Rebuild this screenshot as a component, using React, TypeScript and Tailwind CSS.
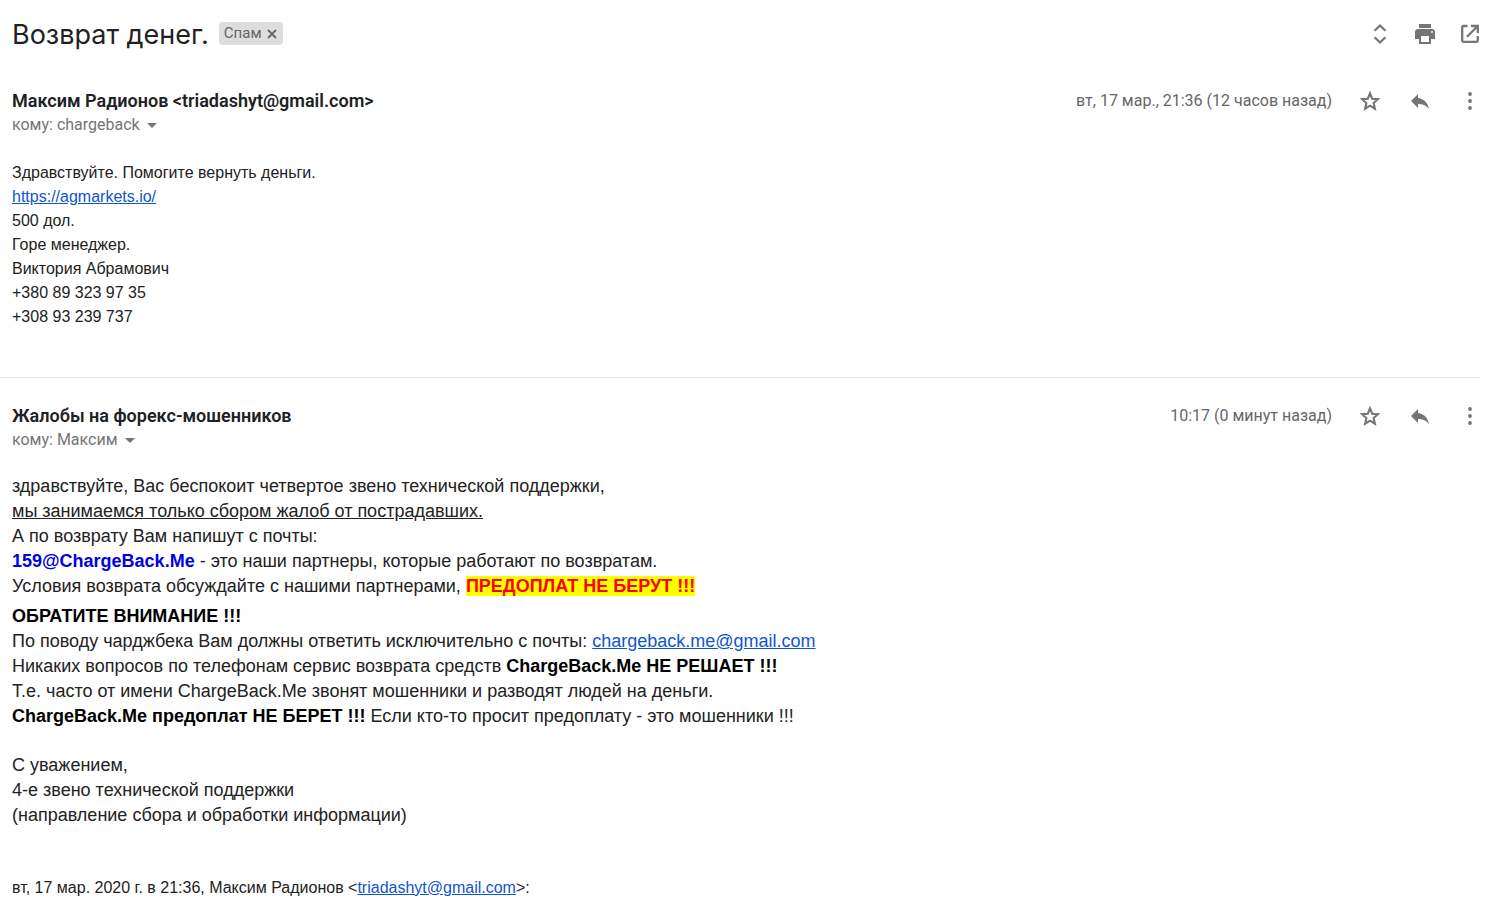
import type { ReactNode } from "react";
import { MdArrowDropDown, MdReply } from "react-icons/md";

interface MessageProps {
  sender: string;
  recipient: string;
  date: string;
  children: ReactNode;
}

function ExpandIcon() {
  return (
    <svg viewBox="0 0 24 24" className="size-6" fill="none" stroke="currentColor" strokeWidth="2.2" aria-hidden="true">
      <path d="M6.600 8.800L12 3.500l5.400 5.300M6.600 15.200L12 20.500l5.400-5.300" />
    </svg>
  );
}

function PrintIcon() {
  return (
    <svg viewBox="0 0 24 24" className="size-6" fill="currentColor" fillRule="evenodd" aria-hidden="true">
      <path d="M6 2h12v4H6z" />
      <path d="M5 7h14c1.700 0 3 1.300 3 3v7h-4v5H6v-5H2v-7c0-1.700 1.300-3 3-3zm3 7v6h8v-6H8zm11-5a1 1 0 100 2 1 1 0 000-2z" />
    </svg>
  );
}

function OpenInNewIcon() {
  return (
    <svg viewBox="0 0 24 24" className="size-6" fill="none" stroke="currentColor" strokeWidth="2.300" aria-hidden="true">
      <path d="M9.500 4H5.500Q4.200 4 4.200 5.300v13.200q0 1.300 1.300 1.300h13q1.300 0 1.300-1.300V14" />
      <path d="M13 4h6.800v7M19.500 4.300L9 14.800" />
    </svg>
  );
}

function StarIcon() {
  return (
    <svg viewBox="0 0 24 24" className="size-6" fill="none" stroke="currentColor" strokeWidth="2.100" aria-hidden="true">
      <path d="M12 4.300l2.200 5.400 5.700.5-4.300 3.800 1.300 5.700L12 16.700l-4.900 3 1.300-5.700-4.300-3.800 5.700-.5z" />
    </svg>
  );
}

function MoreIcon() {
  return (
    <svg viewBox="0 0 24 24" className="size-6" fill="currentColor" aria-hidden="true">
      <circle cx="12" cy="5" r="1.900" />
      <circle cx="12" cy="12" r="1.900" />
      <circle cx="12" cy="19" r="1.900" />
    </svg>
  );
}

function CloseIcon() {
  return (
    <svg viewBox="0 0 12 12" className="size-3" fill="none" stroke="currentColor" strokeWidth="1.800" aria-hidden="true">
      <path d="M2 2l8 8M10 2l-8 8" />
    </svg>
  );
}

function IconButton({ label, children }: { label: string; children: ReactNode }) {
  return (
    <button type="button" aria-label={label} title={label} className="shrink-0 text-[#757575] hover:text-gray-900">
      {children}
    </button>
  );
}

function Message({ sender, recipient, date, children }: MessageProps) {
  return (
    <article className="pr-[18px] pl-3">
      <header className="flex items-start justify-between gap-6 font-[Roboto,sans-serif]">
        <div>
          <h2 className="text-lg leading-6 font-semibold text-[#202124]">{sender}</h2>
          <button type="button" className="flex h-6 items-center text-base text-[#757575]">
            <span>кому: {recipient}</span>
            <MdArrowDropDown className="size-6" />
          </button>
        </div>
        <div className="flex h-6 items-center gap-[26px]">
          <time className="text-base text-[#666]">{date}</time>
          <IconButton label="Пометить">
            <StarIcon />
          </IconButton>
          <IconButton label="Ответить">
            <MdReply className="size-6" />
          </IconButton>
          <IconButton label="Ещё">
            <MoreIcon />
          </IconButton>
        </div>
      </header>
      {children}
    </article>
  );
}

function MailLink({ href, children }: { href: string; children: ReactNode }) {
  return (
    <a href={href} className="text-[#1155cc] underline">
      {children}
    </a>
  );
}

export default function App() {
  return (
    <main className="bg-white font-['Liberation_Sans',Arial,sans-serif] text-[#222]">
      {/* Subject */}
      <div className="flex items-center justify-between pt-[14px] pr-[18px] pl-3">
        <div className="flex items-center gap-[10px] font-[Roboto,sans-serif]">
          <h1 className="pt-[3px] font-[Inter,sans-serif] text-[27px] leading-9 text-[#202124]">Возврат денег.</h1>
          <span className="flex h-[23px] items-center gap-1 rounded bg-[#ddd] px-[5px] text-[15px] text-[#666]">
            Спам
            <button type="button" aria-label="Удалить ярлык">
              <CloseIcon />
            </button>
          </span>
        </div>
        <div className="flex items-center gap-[21px]">
          <IconButton label="Развернуть все">
            <ExpandIcon />
          </IconButton>
          <IconButton label="Печать">
            <PrintIcon />
          </IconButton>
          <IconButton label="В новом окне">
            <OpenInNewIcon />
          </IconButton>
        </div>
      </div>

      <div className="pt-9">
        <Message sender="Максим Радионов <triadashyt@gmail.com>" recipient="chargeback" date="вт, 17 мар., 21:36 (12 часов назад)">
          <div className="pt-6 pb-12 text-base leading-6">
            <p>Здравствуйте. Помогите вернуть деньги.</p>
            <p>
              <MailLink href="https://agmarkets.io/">https://agmarkets.io/</MailLink>
            </p>
            <p>500 дол.</p>
            <p>Горе менеджер.</p>
            <p>Виктория Абрамович</p>
            <p>+380 89 323 97 35</p>
            <p>+308 93 239 737</p>
          </div>
        </Message>
      </div>

      <hr className="mr-5 border-[#e8e8e8]" />

      <div className="pt-[26px]">
        <Message sender="Жалобы на форекс-мошенников" recipient="Максим" date="10:17 (0 минут назад)">
          <div className="pt-[22px] text-lg leading-[25px]">
            <p>здравствуйте, Вас беспокоит четвертое звено технической поддержки,</p>
            <p>
              <u>мы занимаемся только сбором жалоб от пострадавших.</u>
            </p>
            <p>А по возврату Вам напишут с почты:</p>
            <p>
              <b className="text-[#0000e6]">159@ChargeBack.Me</b> - это наши партнеры, которые работают по возвратам.
            </p>
            <p>
              Условия возврата обсуждайте с нашими партнерами,{" "}
              <b className="bg-[#ffff00] text-[#f00]">ПРЕДОПЛАТ НЕ БЕРУТ !!!</b>
            </p>
            <p className="pt-[5px] font-bold text-black">ОБРАТИТЕ ВНИМАНИЕ !!!</p>
            <p>
              По поводу чарджбека Вам должны ответить исключительно с почты:{" "}
              <MailLink href="mailto:chargeback.me@gmail.com">chargeback.me@gmail.com</MailLink>
            </p>
            <p>
              Никаких вопросов по телефонам сервис возврата средств <b className="text-black">ChargeBack.Me НЕ РЕШАЕТ !!!</b>
            </p>
            <p>Т.е. часто от имени ChargeBack.Me звонят мошенники и разводят людей на деньги.</p>
            <p>
              <b className="text-black">ChargeBack.Me предоплат НЕ БЕРЕТ !!!</b> Если кто-то просит предоплату - это мошенники !!!
            </p>
            <div className="pt-6">
              <p>С уважением,</p>
              <p>4-е звено технической поддержки</p>
              <p>(направление сбора и обработки информации)</p>
            </div>
          </div>
          <p className="pt-12 text-base leading-6">
            вт, 17 мар. 2020 г. в 21:36, Максим Радионов &lt;
            <MailLink href="mailto:triadashyt@gmail.com">triadashyt@gmail.com</MailLink>&gt;:
          </p>
        </Message>
      </div>
    </main>
  );
}
